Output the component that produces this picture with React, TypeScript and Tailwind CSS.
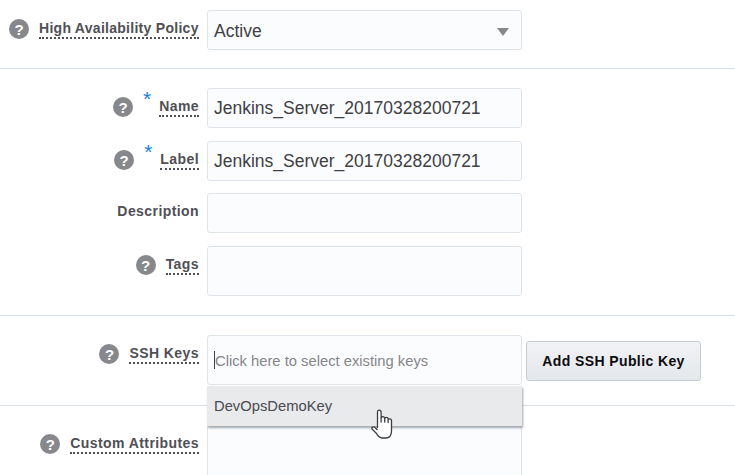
const FONT = 'font-["Liberation_Sans",Arial,sans-serif]';

function Help({ className = '' }: { className?: string }) {
  return (
    <span className={`flex h-5 w-5 shrink-0 items-center justify-center rounded-full bg-[#86888c] text-[15px] leading-none font-bold text-white ${className}`}>
      ?
    </span>
  );
}

function Label({ text, help = true, required, dotted = true }: { text: string; help?: boolean; required?: boolean; dotted?: boolean }) {
  return (
    <div className="flex w-[199px] shrink-0 items-start justify-end">
      {help && <Help className="mt-[9px] mr-[10px]" />}
      {required && <span className="mt-[1px] mr-[8px] text-[21px] leading-[20px] text-[#1a7ee0]">*</span>}
      <span className={`mt-[9px] text-[14px] leading-[18px] font-bold tracking-[0.42px] whitespace-nowrap text-[#4f4f55] ${dotted ? 'border-b-2 border-dotted border-[#4f4f55]' : ''}`}>
        {text}
      </span>
    </div>
  );
}

function Field({ value, h = 'h-10', children }: { value?: string; h?: string; children?: React.ReactNode }) {
  return (
    <div className={`relative ml-2 flex w-[315px] shrink-0 items-center rounded-[3px] border border-[#dfe4ea] bg-[#fbfcfe] px-[6px] text-[17.5px] text-[#3f3f44] ${h}`}>
      {value}
      {children}
    </div>
  );
}

export default function App() {
  return (
    <div className={`h-[475px] w-[735px] overflow-hidden bg-white pt-[10px] ${FONT}`}>
      <div className="border-b border-[#d9dfe6] pb-[18px]">
        <div className="flex">
          <div className="flex w-[199px] shrink-0 items-start">
            <Help className="mt-[9px] ml-[9px] mr-[10px]" />
            <span className="mt-[9px] border-b-2 border-dotted border-[#4f4f55] text-[14px] leading-[18px] font-bold tracking-[0.28px] whitespace-nowrap text-[#4f4f55]">
              High Availability Policy
            </span>
          </div>
          <Field>
            <span className="pt-[2px]">Active</span>
            <span className="absolute top-[17px] right-[12px] h-0 w-0 border-x-[6px] border-t-[8px] border-x-transparent border-t-[#86888c]" />
          </Field>
        </div>
      </div>

      <div className="flex flex-col border-b border-[#d9dfe6] pt-[19px] pb-[19px]">
        <div className="flex">
          <Label text="Name" required />
          <Field value="Jenkins_Server_20170328200721" />
        </div>
        <div className="mt-[13px] flex">
          <Label text="Label" required />
          <Field value="Jenkins_Server_20170328200721" />
        </div>
        <div className="mt-3 flex">
          <Label text="Description" help={false} dotted={false} />
          <Field />
        </div>
        <div className="mt-[13px] flex">
          <Label text="Tags" />
          <Field h="h-[50px]" />
        </div>
      </div>

      <div className="border-b border-[#d9dfe6] pt-[19px] pb-5">
        <div className="flex">
          <Label text="SSH Keys" />
          <Field h="h-[50px]">
            <span className="h-[18px] w-px bg-[#3f3f44]" />
            <span className="pt-[2px] text-[14.75px] text-[#85858a]">Click here to select existing keys</span>
            <div className="absolute top-[50px] left-[-1px] z-10 flex h-10 w-[315px] items-center bg-[#e9eaec] px-[7px] text-[14.75px] text-[#4a4a50] shadow-[1px_2px_2px_rgba(90,100,115,0.55)]">
              DevOpsDemoKey
            </div>
            {/* pointer cursor */}
            <svg className="absolute top-[73px] left-[163px] z-20" width="24" height="30" viewBox="0 0 24 30">
              <path
                d="M6.5 19 V3 a1.8 1.8 0 0 1 3.6 0 V13 V9.5 a1.8 1.8 0 0 1 3.6 0 V13 V10 a1.7 1.7 0 0 1 3.4 0 V13.5 V11.5 a1.7 1.7 0 0 1 3.4 0 V22 c0 4-2 7-6 7 h-3.5 c-3 0-4-2-5.5-4.5 L1 20 c-.8-1.6 1.6-3 3-1.5 L6.5 21"
                fill="#fff"
                stroke="#3c3c40"
                strokeWidth="1.3"
                strokeLinejoin="round"
              />
            </svg>
          </Field>
          <button className="mt-[6px] ml-1 h-10 w-[175px] rounded-[3px] border border-[#c4ccd6] bg-gradient-to-b from-[#f1f2f4] to-[#e4e7eb] text-[14px] font-bold tracking-[0.4px] text-[#0c0c10]">
            Add SSH Public Key
          </button>
        </div>
      </div>

      <div className="pt-[19px]">
        <div className="flex">
          <Label text="Custom Attributes" />
          <Field h="h-[70px]" />
        </div>
      </div>
    </div>
  );
}
